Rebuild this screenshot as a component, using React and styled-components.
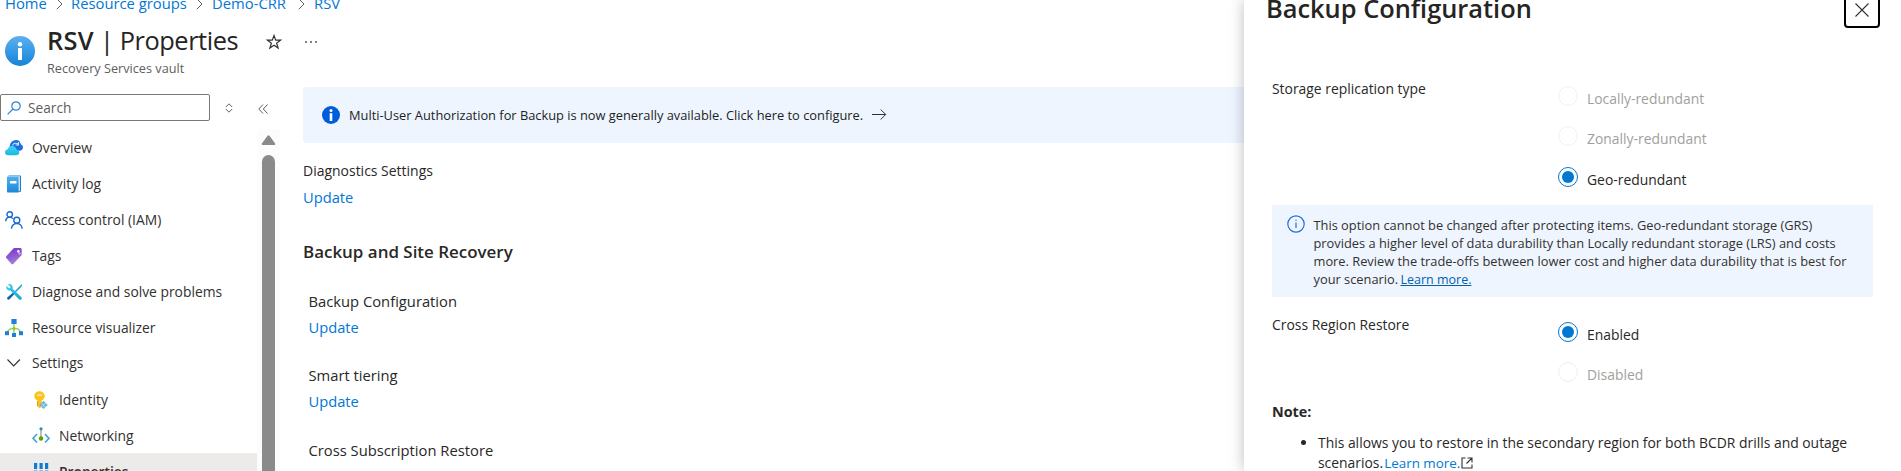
import React from "react";
import styled, { createGlobalStyle } from "styled-components";

const GlobalStyle = createGlobalStyle`
  *, *::before, *::after { box-sizing: border-box; }
  body {
    margin: 0;
    background: #fff;
    color: #292827;
    font-family: "Open Sans", "Noto Sans", sans-serif;
    overflow: hidden;
  }
`;

const Page = styled.div`
  display: flex;
  height: 471px;
  overflow: hidden;
`;

const Portal = styled.div`
  flex: 0 0 1244px;
  height: 471px;
  overflow: hidden;
`;

const Breadcrumb = styled.nav`
  display: flex;
  align-items: center;
  height: 20px;
  margin-top: -7px;
  padding-left: 5px;
  font-size: 14.8px;
  line-height: 20px;
`;

const Crumb = styled.a`
  width: ${(p) => p.$width}px;
  white-space: nowrap;
  color: #0078d4;
`;

const CrumbArrow = styled.svg`
  width: 7px;
  height: 12px;
  margin: 1px ${(p) => p.$after}px 0 9px;
`;

const Header = styled.header`
  display: flex;
  height: 65px;
  padding: 9px 0 0 5px;
`;

const HeaderIcon = styled.svg`
  width: 30px;
  height: 30px;
  margin: 14px 12px 0 0;
`;

const TitleRow = styled.div`
  display: flex;
  align-items: center;
  height: 36px;
`;

const Title = styled.h1`
  margin: 0;
  width: 219px;
  font-size: 25.4px;
  font-weight: 400;
  line-height: 36px;
  letter-spacing: -0.45px;
  white-space: nowrap;
  color: #252423;

  strong { font-weight: 600; letter-spacing: 0.3px; }
`;

const Subtitle = styled.div`
  font-size: 12.7px;
  line-height: 20px;
  color: #605e5c;
`;

const StarIcon = styled.svg`
  width: 16px;
  height: 16px;
  margin-top: 3px;
`;

const DotsIcon = styled.svg`
  width: 14px;
  height: 4px;
  margin: 3px 0 0 22px;
`;

const Body = styled.div`
  display: flex;
  height: 393px;
`;

const Sidebar = styled.aside`
  flex: 0 0 280px;
  padding-top: 16px;
`;

const SearchRow = styled.div`
  display: flex;
  align-items: center;
  height: 27px;
`;

const SearchBox = styled.div`
  display: flex;
  align-items: center;
  width: 210px;
  height: 27px;
  padding-left: 6px;
  border: 1px solid #7a7876;
  border-radius: 2px;
  font-size: 13.7px;
  color: #605e5c;

  svg { width: 14px; height: 14px; margin-right: 7px; }
`;

const SortIcon = styled.svg`
  width: 8px;
  height: 10px;
  margin-left: 14.5px;
`;

const CollapseIcon = styled.svg`
  width: 10px;
  height: 10px;
  margin: 2px 0 0 25px;
`;

const MenuArea = styled.div`
  display: flex;
  height: 350px;
  margin-top: 8px;
`;

const Menu = styled.ul`
  flex: 0 0 257px;
  margin: 0;
  padding: 0;
  list-style: none;
`;

const MenuItem = styled.li`
  display: flex;
  align-items: center;
  height: 36px;
  padding-left: ${(p) => (p.$nested ? 32 : 5)}px;
  background: ${(p) => (p.$selected ? "#edebe9" : "transparent")};
  font-size: 13.85px;
  font-weight: ${(p) => (p.$selected ? 600 : 400)};
  color: #323130;
  white-space: nowrap;

  svg { width: 18px; height: 18px; margin-right: 9px; margin-top: ${(p) => (p.$group ? -1 : 1)}px; }
  span { margin-top: ${(p) => (p.$group ? -1 : 1)}px; }
`;

const Scrollbar = styled.div`
  display: flex;
  flex-direction: column;
  align-items: center;
  width: 23px;
  padding-top: 6px;
  background: #fcfcfc;

  svg { width: 15px; height: 11px; }
`;

const ScrollThumb = styled.div`
  width: 13px;
  height: 340px;
  margin-top: 10px;
  border-radius: 7px;
  background: #8a8a8a;
`;

const Main = styled.main`
  flex: 1;
  padding: 9px 0 0 23px;
`;

const Banner = styled.div`
  display: flex;
  align-items: center;
  height: 56px;
  padding-left: 19px;
  border-radius: 3px 0 0 3px;
  background: #eff5ff;
  font-size: 12.83px;
  color: #201f1e;
  white-space: nowrap;
`;

const BannerIcon = styled.svg`
  width: 18px;
  height: 18px;
  margin-right: 9px;
`;

const ArrowIcon = styled.svg`
  width: 15px;
  height: 12px;
  margin-left: 9px;
`;

const Setting = styled.section`
  height: 52px;
  margin: ${(p) => p.$top}px 0 0 ${(p) => p.$indent || 0}px;
  font-size: ${(p) => p.$size || 14.75}px;
  line-height: 26px;
`;

const UpdateLink = styled.a`
  display: block;
  font-size: 14.7px;
  color: #0078d4;
`;

const SectionTitle = styled.h2`
  margin: 29px 0 0;
  font-size: 16.96px;
  font-weight: 600;
  line-height: 26px;
`;

const Panel = styled.aside`
  position: relative;
  flex: 0 0 657px;
  height: 471px;
  padding-left: 28px;
  background: #fff;
  box-shadow: 0 0 14px rgba(0, 0, 0, 0.26);
  font-size: 13.9px;
`;

const PanelHeader = styled.div`
  display: flex;
  justify-content: space-between;
  align-items: flex-start;
  height: 66px;
  margin: 0 21px 0 -6px;
`;

const PanelTitle = styled.h2`
  margin: -10px 0 0;
  font-size: 25.4px;
  font-weight: 600;
  line-height: 36px;
  color: #252423;
`;

const CloseButton = styled.button`
  display: flex;
  justify-content: center;
  width: 36px;
  height: 36px;
  margin-top: -8px;
  padding: 9px 0 0;
  border: 2px solid #000;
  border-radius: 4px;
  background: #fff;

  svg { width: 14px; height: 14px; }
`;

const Field = styled.div`
  display: flex;
  height: ${(p) => p.$height}px;
`;

const FieldLabel = styled.div`
  width: 286px;
  padding-top: ${(p) => p.$top}px;
  line-height: 20px;
`;

const Options = styled.div`
  padding-top: ${(p) => p.$top}px;
`;

const Option = styled.label`
  display: flex;
  align-items: flex-start;
  height: 40px;
  line-height: 20px;
  color: ${(p) => (p.$disabled ? "#a19f9d" : "#292827")};

  & + & { margin-bottom: 1px; }
  span { margin-top: 3px; }
`;

const RadioCircle = styled.i`
  display: grid;
  place-items: center;
  width: 20px;
  height: 20px;
  margin-right: 9px;
  border: 1px solid ${(p) => (p.$checked ? "#0078d4" : "#f1f0ef")};
  border-radius: 50%;

  &::after {
    content: "";
    width: 12px;
    height: 12px;
    border-radius: 50%;
    background: ${(p) => (p.$checked ? "#0078d4" : "transparent")};
  }
`;

const InfoBox = styled.div`
  display: flex;
  width: 601px;
  height: 92px;
  padding: 10px 0 0 14.5px;
  background: #eff5ff;
  font-size: 12.84px;
  line-height: 18px;
  color: #323130;
  white-space: nowrap;

  svg { width: 18px; height: 18px; margin-right: 9px; }
  p { margin: 1px 0 0; }
  a { margin-left: -1px; font-size: 12.5px; color: #0062ad; text-decoration: underline; }
`;

const NoteTitle = styled.div`
  margin-top: 8px;
  font-size: 14.4px;
  font-weight: 700;
  line-height: 20px;
`;

const NoteList = styled.ul`
  margin: 11px 0 0;
  padding-left: 46px;
  line-height: 20px;
  white-space: nowrap;

  a { margin-left: -2.5px; font-size: 13.4px; color: #0078d4; }
  svg { width: 12px; height: 12px; margin-left: 1px; vertical-align: -1px; }
`;

const OverviewIcon = () => (
  <svg viewBox="0 0 18 18">
    <path d="M5 9.500C4 5 7 1 11 1c3 0 4.500 2 4.800 4.300C17.500 6 18 7.300 18 8.600c0 2-1.600 3.200-3.400 3.200H9z" fill="#1b6fe0" />
    <path d="M7.500 6.500c1-2.400 4-3 5.600-1.200M13.500 3v3h-3" stroke="#c9e4ff" strokeWidth="1.100" fill="none" />
    <path d="M3.300 16.300C1.300 16.300 0 15 0 13.300s1.200-2.900 2.800-3.100C3.200 8 5 6.900 7 6.900c2.300 0 4 1.400 4.500 3.500 1.700.1 2.800 1.300 2.800 2.900 0 1.700-1.300 3-3.100 3z" fill="url(#cloudFill)" />
    <defs>
      <linearGradient id="cloudFill" x1="0" y1="0" x2="0" y2="1">
        <stop stopColor="#38d8f4" /><stop offset="1" stopColor="#1fb5dc" />
      </linearGradient>
    </defs>
  </svg>
);

const ActivityIcon = () => (
  <svg viewBox="0 0 18 18">
    <path d="M3.500.4H15c.6 0 1 .4 1 1v14.700c0 .6-.4 1-1 1H3.500z" fill="#1b7fce" />
    <path d="M3 1.200h11.800v15H3z" fill="#f4fbff" />
    <path d="M2.800 1.400h10.900v16.200H3c-.6 0-1-.4-1-1V2.200c0-.5.300-.8.800-.8z" fill="url(#bookFill)" />
    <rect x="5" y="6" width="6.500" height="2.500" rx=".4" fill="#fff" />
    <defs>
      <linearGradient id="bookFill" x1="0" y1="0" x2="0" y2="1">
        <stop stopColor="#4fb0ec" /><stop offset="1" stopColor="#1c86d9" />
      </linearGradient>
    </defs>
  </svg>
);

const AccessIcon = () => (
  <svg viewBox="0 0 18 18" fill="none" stroke="#1667d9" strokeWidth="1.400">
    <circle cx="4.700" cy="3.400" r="2.700" />
    <path d="M.7 10.300c0-2.400 1.700-4.200 4-4.200 1.400 0 2.500.6 3.200 1.600" />
    <circle cx="11.800" cy="9.200" r="3" />
    <path d="M6.500 17.800c0-3 2.200-5.300 5.300-5.300s5.300 2.300 5.300 5.300" />
  </svg>
);

const TagsIcon = () => (
  <svg viewBox="0 0 18 18">
    <path d="M9.500 1h5.700c.8 0 1.500.7 1.500 1.500v4.700c0 .5-.1.8-.5 1.200l-8 8.700c-.5.500-1.200.5-1.700 0L1.300 11c-.5-.5-.5-1.200 0-1.700l7.100-7.800c.3-.3.600-.5 1.100-.5z" fill="url(#tagFill)" />
    <circle cx="13.300" cy="4.300" r="1.200" fill="#fff" />
    <path d="M13.400 4.200l1 3.200 1.200-1.200" fill="none" stroke="#e8dcfa" strokeWidth=".9" />
    <defs>
      <linearGradient id="tagFill" x1=".3" y1="0" x2=".6" y2="1">
        <stop stopColor="#7636c8" /><stop offset=".5" stopColor="#8f5bd0" /><stop offset="1" stopColor="#a984dc" />
      </linearGradient>
    </defs>
  </svg>
);

const DiagnoseIcon = () => (
  <svg viewBox="0 0 18 18">
    <path d="M16.600 1.200l.6.700-1 2-5.300 5.400-1.100-1.100 5.300-5.500z" fill="#2a9fc7" />
    <path d="M8.500 9.200l1.400 1.400-5.600 6c-1 .9-3-.9-2-2z" fill="#0b63a8" />
    <path d="M3 1.200L5.700 4 4.300 5.600 1.400 3C.8 5.300 2.200 8 5.500 7.400l8.600 9c1.500 1.400 3.600-.6 2.300-2.200L7.600 5.700C8.200 2.700 5.800.6 3 1.200z" fill="url(#toolFill)" />
    <defs>
      <linearGradient id="toolFill" x1="0" y1="0" x2="1" y2="1">
        <stop stopColor="#35cdee" /><stop offset="1" stopColor="#19a8d4" />
      </linearGradient>
    </defs>
  </svg>
);

const VisualizerIcon = () => (
  <svg viewBox="0 0 18 18">
    <path d="M9 4v11M2.300 13.500c1-3 3.500-4.200 6.700-4.200s5.700 1.200 6.700 4.200" fill="none" stroke="#9bd24a" strokeWidth="1.500" />
    <rect x="6.400" y="0" width="5.200" height="5" fill="#1f7fe0" />
    <rect x="0" y="12.200" width="4" height="4" fill="#1f7fe0" />
    <rect x="7" y="14" width="4" height="4" fill="#1f7fe0" />
    <rect x="14" y="12.200" width="4" height="4" fill="#1f7fe0" />
    <circle cx="9" cy="9.500" r="1.500" fill="#86c83a" />
  </svg>
);

const ChevronDownIcon = () => (
  <svg viewBox="0 0 18 18" fill="none" stroke="#323130" strokeWidth="1.100">
    <path d="M2.500 5.500L8.700 12l6.200-6.500" />
  </svg>
);

const IdentityIcon = () => (
  <svg viewBox="0 0 18 18">
    <path d="M7.500.2c3 0 5.200 2.200 5.200 4.900 0 2.100-1.200 3.800-3.100 4.600v1.200l1 1-1 1.200 1 1.200-1 1.300-2 1.900-2-2V9.700C3.700 8.900 2.300 7.200 2.300 5.100 2.300 2.400 4.500.2 7.500.2z" fill="#fcc419" />
    <path d="M5.600 10v5.300" stroke="#d99a12" strokeWidth=".9" />
    <rect x="5" y="3.500" width="5" height="1.200" rx=".6" fill="#fff4cf" />
    <path d="M11.500 9.800l4.300 4.100-4.300 4-4.300-4z" fill="#6bb7d6" />
    <path d="M9.500 12l4 4M13.500 12l-4 4" stroke="#d5edf6" strokeWidth=".7" />
  </svg>
);

const NetworkingIcon = () => (
  <svg viewBox="0 0 18 18" fill="none">
    <path d="M5 7l-4 4.300L5 15.500M13 7l4 4.300-4 4.200" stroke="#4aa5d6" strokeWidth="1.700" />
    <path d="M9 2v9" stroke="#7a7a7a" strokeWidth="1" />
    <circle cx="9" cy="1.800" r="1.600" fill="#2b8fc7" />
    <circle cx="9" cy="11.500" r="2.200" fill="#57a300" />
  </svg>
);

const PropertiesIcon = () => (
  <svg viewBox="0 0 18 18">
    {[2, 7.500, 13].map((x) => (
      <g key={x}>
        <rect x={x} y="0" width="3.200" height="6" fill="#0f7bd4" />
        <rect x={x} y="7" width="3.200" height="10" fill="#6cc7ea" />
      </g>
    ))}
  </svg>
);

const MENU = [
  { label: "Overview", Icon: OverviewIcon },
  { label: "Activity log", Icon: ActivityIcon },
  { label: "Access control (IAM)", Icon: AccessIcon },
  { label: "Tags", Icon: TagsIcon },
  { label: "Diagnose and solve problems", Icon: DiagnoseIcon },
  { label: "Resource visualizer", Icon: VisualizerIcon },
  { label: "Settings", Icon: ChevronDownIcon, group: true },
  { label: "Identity", Icon: IdentityIcon, nested: true },
  { label: "Networking", Icon: NetworkingIcon, nested: true },
  { label: "Properties", Icon: PropertiesIcon, nested: true, selected: true },
];

const CRUMBS = [
  { label: "Home", width: 42, after: 8 },
  { label: "Resource groups", width: 116, after: 9 },
  { label: "Demo-CRR", width: 77, after: 9 },
  { label: "RSV", width: 30 },
];

const Radio = ({ label, checked, disabled }) => (
  <Option $disabled={disabled}>
    <RadioCircle $checked={checked} />
    <span>{label}</span>
  </Option>
);

export default function App() {
  return (
    <Page>
      <GlobalStyle />
      <Portal>
        <Breadcrumb>
          {CRUMBS.map((c) => (
            <React.Fragment key={c.label}>
              <Crumb $width={c.width}>{c.label}</Crumb>
              {c.after && (
                <CrumbArrow $after={c.after} viewBox="0 0 7 12" fill="none" stroke="#605e5c">
                  <path d="M.8 .8L6 6 .8 11.200" />
                </CrumbArrow>
              )}
            </React.Fragment>
          ))}
        </Breadcrumb>
        <Header>
          <HeaderIcon viewBox="0 0 30 30">
            <defs>
              <linearGradient id="headerFill" x1="0" y1="0" x2="0" y2="1">
                <stop stopColor="#5bb0f0" /><stop offset="1" stopColor="#1683d8" />
              </linearGradient>
            </defs>
            <circle cx="15" cy="15" r="15" fill="url(#headerFill)" />
            <circle cx="15" cy="8.200" r="2.200" fill="#fff" />
            <rect x="13" y="12" width="4" height="12" rx=".5" fill="#fff" />
          </HeaderIcon>
          <div>
            <TitleRow>
              <Title><strong>RSV</strong> | Properties</Title>
              <StarIcon viewBox="0 0 16 16" fill="none" stroke="#323130" strokeWidth="1.200">
                <path d="M8 1.500l1.700 4.700h4.800l-3.900 3 1.500 4.900L8 11.200l-4.100 2.900 1.500-4.900-3.900-3h4.800z" />
              </StarIcon>
              <DotsIcon viewBox="0 0 14 4" fill="#484644">
                <circle cx="2" cy="2" r=".9" /><circle cx="7" cy="2" r=".9" /><circle cx="12" cy="2" r=".9" />
              </DotsIcon>
            </TitleRow>
            <Subtitle>Recovery Services vault</Subtitle>
          </div>
        </Header>
        <Body>
          <Sidebar>
            <SearchRow>
              <SearchBox>
                <svg viewBox="0 0 14 14" fill="none" stroke="#2b88d8" strokeWidth="1.200">
                  <circle cx="9" cy="5" r="4.200" /><path d="M6 8L.6 13.400" />
                </svg>
                <span>Search</span>
              </SearchBox>
              <SortIcon viewBox="0 0 8 10" fill="none" stroke="#605e5c">
                <path d="M.8 4L4 .8 7.200 4M.8 6L4 9.200 7.200 6" />
              </SortIcon>
              <CollapseIcon viewBox="0 0 10 10" fill="none" stroke="#605e5c">
                <path d="M5 .5L.8 5 5 9.500M9.500 .5L5.300 5l4.200 4.500" />
              </CollapseIcon>
            </SearchRow>
            <MenuArea>
              <Menu>
                {MENU.map(({ label, Icon, nested, selected, group }) => (
                  <MenuItem key={label} $nested={nested} $selected={selected} $group={group}>
                    <Icon />
                    <span>{label}</span>
                  </MenuItem>
                ))}
              </Menu>
              <Scrollbar>
                <svg viewBox="0 0 15 11"><path d="M6.300 1q1.200-1.400 2.400 0l5.600 7.700q.8 2.200-1 2.200H1.700q-1.800 0-1-2.200z" fill="#8a8a8a" /></svg>
                <ScrollThumb />
              </Scrollbar>
            </MenuArea>
          </Sidebar>
          <Main>
            <Banner>
              <BannerIcon viewBox="0 0 18 18">
                <circle cx="9" cy="9" r="9" fill="#015cda" />
                <circle cx="9" cy="4.600" r="1.500" fill="#fff" />
                <rect x="7.700" y="7.200" width="2.600" height="7.800" fill="#fff" />
              </BannerIcon>
              <span>Multi-User Authorization for Backup is now generally available. Click here to configure.</span>
              <ArrowIcon viewBox="0 0 15 12" fill="none" stroke="#323130" strokeWidth="1">
                <path d="M0 5.500h13.500M8.700 .5l5 5-5 5" />
              </ArrowIcon>
            </Banner>
            <Setting $top={15} $size={13.98}>
              Diagnostics Settings
              <UpdateLink>Update</UpdateLink>
            </Setting>
            <SectionTitle>Backup and Site Recovery</SectionTitle>
            <Setting $top={23} $indent={5.5}>
              Backup Configuration
              <UpdateLink>Update</UpdateLink>
            </Setting>
            <Setting $top={22} $indent={5.5}>
              Smart tiering
              <UpdateLink>Update</UpdateLink>
            </Setting>
            <Setting $top={23} $indent={5.5}>
              Cross Subscription Restore
              <UpdateLink>Update</UpdateLink>
            </Setting>
          </Main>
        </Body>
      </Portal>
      <Panel>
        <PanelHeader>
          <PanelTitle>Backup Configuration</PanelTitle>
          <CloseButton aria-label="Close">
            <svg viewBox="0 0 14 14" fill="none" stroke="#323130" strokeWidth="1.100">
              <path d="M.5 .5l13 13M13.500 .5l-13 13" />
            </svg>
          </CloseButton>
        </PanelHeader>
        <Field $height={139}>
          <FieldLabel $top={13}>Storage replication type</FieldLabel>
          <Options $top={20}>
            <Radio label="Locally-redundant" disabled />
            <Radio label="Zonally-redundant" disabled />
            <Radio label="Geo-redundant" checked />
          </Options>
        </Field>
        <InfoBox>
          <svg viewBox="0 0 18 18" fill="none" stroke="#1f6fe0" strokeWidth="1.200">
            <circle cx="9" cy="9" r="8.200" />
            <path d="M9 7.500V13" />
            <circle cx="9" cy="5.300" r=".7" fill="#1f6fe0" stroke="none" />
          </svg>
          <p>
            This option cannot be changed after protecting items. Geo-redundant storage (GRS)<br />
            provides a higher level of data durability than Locally redundant storage (LRS) and costs<br />
            more. Review the trade-offs between lower cost and higher data durability that is best for<br />
            your scenario. <a>Learn more.</a>
          </p>
        </InfoBox>
        <Field $height={97}>
          <FieldLabel $top={18}>Cross Region Restore</FieldLabel>
          <Options $top={25}>
            <Radio label="Enabled" checked />
            <Radio label="Disabled" disabled />
          </Options>
        </Field>
        <NoteTitle>Note:</NoteTitle>
        <NoteList>
          <li>
            This allows you to restore in the secondary region for both BCDR drills and outage<br />
            scenarios. <a>Learn more.</a>
            <svg viewBox="0 0 12 12" fill="none" stroke="#323130" strokeWidth="1.100">
              <path d="M4.500 1H1v10h10V7.500M6.500 1H11v4.500M11 1L5.500 6.500" />
            </svg>
          </li>
        </NoteList>
      </Panel>
    </Page>
  );
}
